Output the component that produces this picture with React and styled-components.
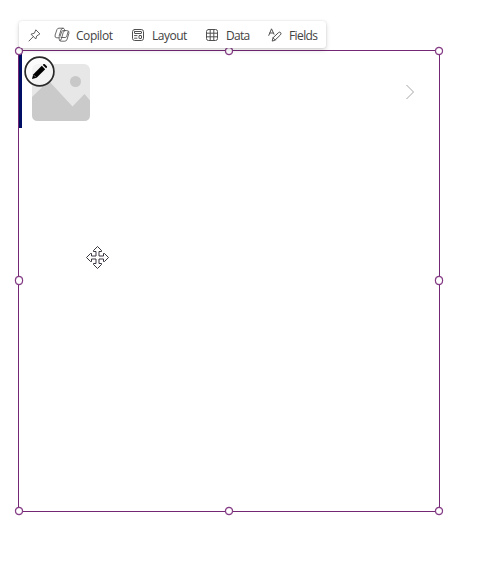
import React from "react";
import styled, { createGlobalStyle } from "styled-components";

const GlobalStyle = createGlobalStyle`
  body { margin: 0; background: #fff; overflow: hidden; }
  * { box-sizing: border-box; }
`;

const Page = styled.main`
  width: 486px;
  height: 571px;
  padding: 21px 0 0 18px;
  background: #fff;
  font-family: "Open Sans", "Noto Sans", sans-serif;
`;

const Toolbar = styled.nav`
  position: relative;
  z-index: 2;
  display: flex;
  align-items: center;
  width: 307px;
  height: 27px;
  margin-left: 1px;
  padding-left: 9px;
  background: #fff;
  border-radius: 3px;
  box-shadow: 0 0 2px rgba(0, 0, 0, 0.12), 0 2px 5px rgba(0, 0, 0, 0.16);
`;

const ToolButton = styled.button`
  display: flex;
  align-items: center;
  flex: none;
  width: ${(p) => p.$width}px;
  height: 27px;
  padding: 1px 0 0;
  border: 0;
  background: none;
  color: #424242;
  font: 400 12px "Open Sans", "Noto Sans", sans-serif;
  letter-spacing: ${(p) => p.$spacing || 0}px;
  white-space: nowrap;
`;

const Icon = styled.svg`
  display: block;
  flex: none;
  width: ${(p) => p.$size}px;
  height: ${(p) => p.$size}px;
  margin-right: ${(p) => p.$gap || 0}px;
  fill: none;
  stroke: #505050;
  stroke-width: 1;
  stroke-linecap: round;
  stroke-linejoin: round;
`;

const Selection = styled.section`
  position: relative;
  width: 422px;
  height: 462px;
  margin-top: 2px;
  border: 1px solid #742774;
`;

const Handle = styled.i`
  position: absolute;
  left: ${(p) => p.$x}px;
  top: ${(p) => p.$y}px;
  width: 8.4px;
  height: 8.4px;
  border: 1px solid #7d2f7e;
  border-radius: 50%;
  background: #fff;
  box-shadow: 0 0 0 0.15px #7d2f7e;
`;

const GalleryRow = styled.article`
  display: flex;
  align-items: center;
  justify-content: space-between;
  height: 77px;
  padding-right: 24px;
`;

const Thumb = styled.div`
  display: flex;
  align-items: center;
  height: 77px;
  padding: 6px 0 0 10px;
  border-left: 3px solid #000f64;
`;

const Picture = styled.svg`
  display: block;
  width: 58px;
  height: 57px;
`;

const Chevron = styled.svg`
  width: 10px;
  height: 16px;
  margin-top: 5px;
  fill: none;
  stroke: #a6a6a6;
`;

const EditBadge = styled.svg`
  position: absolute;
  left: 4px;
  top: 4px;
  width: 32px;
  height: 32px;
`;

const MoveCursor = styled.svg`
  position: absolute;
  left: 67px;
  top: 195px;
  width: 23px;
  height: 23px;
`;

const handles = [
  [-4, -4.4], [206, -4.4], [416, -4.4],
  [-4, 225.4], [416, 225.4],
  [-4, 455.6], [206, 455.6], [416, 455.6],
];

const PinIcon = () => (
  <Icon $size={13} viewBox="0 0 13 13">
    <path d="M8.1 1.1 11.9 4.9 8.7 7 7.8 10 3 5.2 6 4.3ZM5.3 7.6 1 12" strokeWidth=".9" />
  </Icon>
);

const CopilotIcon = () => (
  <Icon $size={16} $gap={6} viewBox="0 0 16 16">
    <path d="M10.8 3.5 10.5 2.5Q10.1 1.2 8.8 1.2H5Q3.5 1.2 3 2.5L1.1 8Q.4 10.8 2.8 10.8H4.4Q5.5 10.8 5.9 9.6L7.7 4.7Q8 3.6 9 3.6H12.8Q15.6 3.6 14.9 6.3L13.2 12Q12.7 14.2 10.8 14.2H7.1Q5.8 14.2 5.4 12.9L5 10.8M8.9 1.2Q7.5 1.4 7 3L5.1 9M11 3.6Q9.7 3.8 9.3 5.2L7.4 11.7Q6.9 13.7 5.8 13.6M7.1 10.5H11.2Q12.4 10.5 12.8 9.2L14 5" strokeWidth=".85" />
  </Icon>
);

const LayoutIcon = () => (
  <Icon $size={14} $gap={7} viewBox="0 0 14 14">
    <rect x="1.5" y="1.5" width="11" height="11" rx="2.2" />
    <rect x="3.5" y="3.5" width="7" height="2" rx=".4" />
    <path d="M3.5 7.6H6M3.5 10.2H6" />
    <rect x="8" y="7.5" width="2.5" height="3" rx=".4" />
  </Icon>
);

const DataIcon = () => (
  <Icon $size={14} $gap={7} viewBox="0 0 14 14">
    <rect x="1.5" y="1.5" width="11" height="11" rx="2" />
    <path d="M5.2 1.5V12.5M8.8 1.5V12.5M1.5 5.2H12.5M1.5 8.8H12.5" />
  </Icon>
);

const FieldsIcon = () => (
  <Icon $size={14} $gap={7} viewBox="0 0 14 14">
    <path d="M.8 7.4 3.5.8 6 6.2M1.8 5H5.2M4.3 12.7 5 9.8 10.4 4.7Q11.7 3.6 12.7 4.7 13.5 5.8 12.4 6.9L7.2 12ZM5 9.8 7.2 12" />
  </Icon>
);

export default function App() {
  return (
    <>
      <GlobalStyle />
      <Page>
        <Toolbar>
          <ToolButton $width={26} aria-label="Pin"><PinIcon /></ToolButton>
          <ToolButton $width={77} $spacing={-0.45}><CopilotIcon />Copilot</ToolButton>
          <ToolButton $width={74} $spacing={-0.5}><LayoutIcon />Layout</ToolButton>
          <ToolButton $width={63} $spacing={-0.7}><DataIcon />Data</ToolButton>
          <ToolButton $width={52} $spacing={-0.6}><FieldsIcon />Fields</ToolButton>
        </Toolbar>
        <Selection>
          <GalleryRow>
            <Thumb>
              <Picture viewBox="0 0 58 57">
                <rect width="58" height="57" rx="6" fill="#e7e7e7" />
                <circle cx="43.5" cy="17.5" r="5.5" fill="#c8c8c8" />
                <path d="M0 33 16 17.5Q17 17 18.3 18.5L40.5 42.5 52.5 30 58 36.5V51Q58 57 52 57H6Q0 57 0 51Z" fill="#cacaca" />
              </Picture>
            </Thumb>
            <Chevron viewBox="0 0 10 16"><path d="M1.5 1 8.5 8 1.5 15" /></Chevron>
          </GalleryRow>
          <EditBadge viewBox="0 0 32 32">
            <circle cx="16.5" cy="16.5" r="14.4" fill="#fafafa" fillOpacity=".7" stroke="#292929" strokeWidth="1.7" />
            <path d="M9 24 10.2 19.4 18.8 10.8 22.2 14.2 13.6 22.8Z" fill="#000" />
            <path d="M19.8 9.9 20.6 9.1Q21.2 8.7 21.8 9.2L23.8 11.2Q24.3 11.8 23.9 12.4L23.1 13.2Z" fill="#000" />
            <path d="M10.8 20.2 12.8 22.2" stroke="#ddd" strokeWidth=".6" />
          </EditBadge>
          <MoveCursor viewBox="0 0 23 23">
            <path d="M11.5.5 15.5 4.5V5.5H13V10H17.5V7.5H18.5L22.5 11.5 18.5 15.5H17.5V13H13V17.5H15.5V18.5L11.5 22.5 7.5 18.5V17.5H10V13H5.5V15.5H4.5L.5 11.5 4.5 7.5H5.5V10H10V5.5H7.5V4.5Z" fill="#fff" stroke="#25202c" strokeWidth=".9" />
          </MoveCursor>
          {handles.map(([x, y]) => <Handle key={`${x}:${y}`} $x={x} $y={y} />)}
        </Selection>
      </Page>
    </>
  );
}
